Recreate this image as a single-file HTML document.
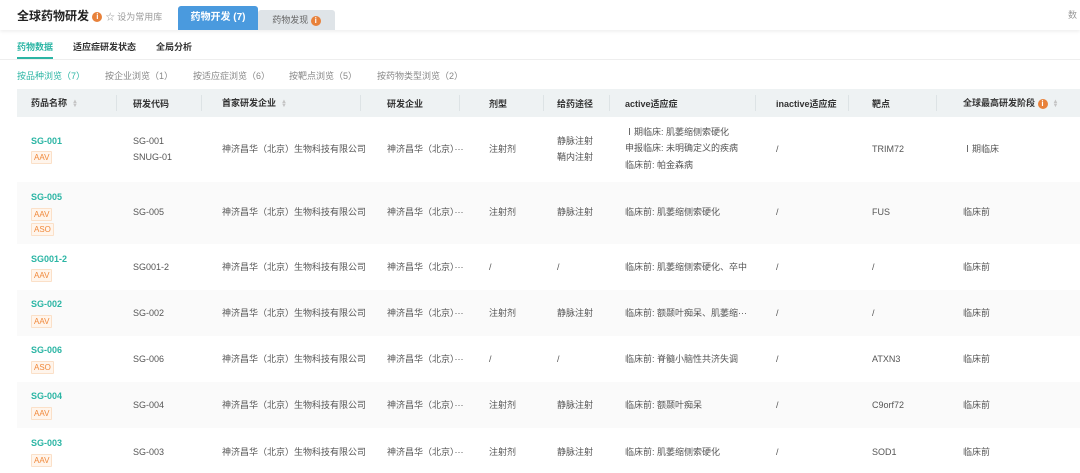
<!DOCTYPE html>
<html><head><meta charset="utf-8"><style>
*{margin:0;padding:0;box-sizing:border-box}
body{width:1080px;height:473px;overflow:hidden;background:#fff;font-family:"Liberation Sans","Noto Sans CJK SC",sans-serif;color:#555;font-size:9px;position:relative}
.a{position:absolute;white-space:nowrap;line-height:12px}
.info{display:inline-block;width:10px;height:10px;border-radius:50%;background:#e8813a;color:#fff;font-size:8px;line-height:10px;text-align:center;font-weight:bold;vertical-align:middle}
.row{position:absolute;left:17px;width:1063px}
.g{background:#fafafa}
.nm{color:#2bb5a4;font-weight:bold;font-size:9px}
.tag{position:absolute;color:#f0883a;background:#fff5ec;border:1px solid #fbe0c8;font-size:8px;padding:0 2px;line-height:11px;border-radius:1px}
.th{font-weight:bold;color:#333;font-size:9px}
.sep{position:absolute;top:95px;width:1px;height:16px;background:#dde3e5}
.sort{display:inline-block;color:#c4c4c4;font-size:6px;line-height:4px;vertical-align:middle;margin-left:5px}
</style></head><body>
<div class="a" style="left:0;top:0;width:1080px;height:30px;box-shadow:0 2px 3px rgba(0,0,0,0.06)"></div>
<div class="a" style="left:17px;top:9px;font-size:12px;font-weight:bold;color:#222;line-height:14px">全球药物研发 <span class="info">i</span> <span style="font-size:9px;font-weight:normal;color:#999">☆ 设为常用库</span></div>
<div class="a" style="left:178px;top:6px;width:80px;height:24px;background:#4a9ade;border-radius:3px 3px 0 0;color:#fff;font-weight:bold;font-size:10px;text-align:center;line-height:24px">药物开发 (7)</div>
<div class="a" style="left:258px;top:10px;width:77px;height:20px;background:#dfe4e8;border-radius:3px 3px 0 0;color:#666;font-size:9px;text-align:center;line-height:20px">药物发现 <span class="info">i</span></div>
<div class="a" style="left:1068px;top:9px;color:#999">数</div>
<div class="a" style="left:17px;top:41px;color:#2bb5a4;font-weight:bold">药物数据</div>
<div class="a" style="left:17px;top:57px;width:36px;height:2px;background:#2bb5a4"></div>
<div class="a" style="left:73px;top:41px;color:#333;font-weight:bold">适应症研发状态</div>
<div class="a" style="left:156px;top:41px;color:#333;font-weight:bold">全局分析</div>
<div class="a" style="left:0;top:59px;width:1080px;height:1px;background:#eee"></div>
<div class="a" style="left:17px;top:70px;color:#2bb5a4">按品种浏览（7）</div>
<div class="a" style="left:105px;top:70px;color:#888">按企业浏览（1）</div>
<div class="a" style="left:193px;top:70px;color:#888">按适应症浏览（6）</div>
<div class="a" style="left:289px;top:70px;color:#888">按靶点浏览（5）</div>
<div class="a" style="left:377px;top:70px;color:#888">按药物类型浏览（2）</div>
<div class="a" style="left:17px;top:89px;width:1063px;height:28px;background:#eef2f3"></div>
<div class="a th" style="left:31px;top:97px">药品名称<span class="sort">▲<br>▼</span></div>
<div class="a th" style="left:133px;top:98px">研发代码</div>
<div class="a th" style="left:222px;top:97px">首家研发企业<span class="sort">▲<br>▼</span></div>
<div class="a th" style="left:387px;top:98px">研发企业</div>
<div class="a th" style="left:489px;top:98px">剂型</div>
<div class="a th" style="left:557px;top:98px">给药途径</div>
<div class="a th" style="left:625px;top:98px">active适应症</div>
<div class="a th" style="left:776px;top:98px">inactive适应症</div>
<div class="a th" style="left:872px;top:98px">靶点</div>
<div class="a th" style="left:963px;top:97px">全球最高研发阶段 <span class="info">i</span><span class="sort">▲<br>▼</span></div>
<div class="sep" style="left:116px"></div><div class="sep" style="left:201px"></div><div class="sep" style="left:360px"></div><div class="sep" style="left:459px"></div><div class="sep" style="left:543px"></div><div class="sep" style="left:609px"></div><div class="sep" style="left:755px"></div><div class="sep" style="left:848px"></div><div class="sep" style="left:936px"></div>

<div class="row g" style="top:182px;height:62px"></div>
<div class="row g" style="top:290px;height:46px"></div>
<div class="row g" style="top:382px;height:46px"></div>

<!-- row1 -->
<div class="a nm" style="left:31px;top:135px">SG-001</div><div class="tag" style="left:31px;top:151px">AAV</div>
<div class="a" style="left:133px;top:135px">SG-001</div><div class="a" style="left:133px;top:151px">SNUG-01</div>
<div class="a" style="left:222px;top:143px">神济昌华（北京）生物科技有限公司</div>
<div class="a" style="left:387px;top:143px">神济昌华（北京）···</div>
<div class="a" style="left:489px;top:143px">注射剂</div>
<div class="a" style="left:557px;top:135px">静脉注射</div><div class="a" style="left:557px;top:151px">鞘内注射</div>
<div class="a" style="left:625px;top:126px">Ⅰ期临床: 肌萎缩侧索硬化</div><div class="a" style="left:625px;top:142px">申报临床: 未明确定义的疾病</div><div class="a" style="left:625px;top:159px">临床前: 帕金森病</div>
<div class="a" style="left:776px;top:143px">/</div><div class="a" style="left:872px;top:143px">TRIM72</div><div class="a" style="left:963px;top:143px">Ⅰ期临床</div>
<!-- row2 -->
<div class="a nm" style="left:31px;top:191px">SG-005</div><div class="tag" style="left:31px;top:208px">AAV</div><div class="tag" style="left:31px;top:223px">ASO</div>
<div class="a" style="left:133px;top:206px">SG-005</div>
<div class="a" style="left:222px;top:206px">神济昌华（北京）生物科技有限公司</div>
<div class="a" style="left:387px;top:206px">神济昌华（北京）···</div>
<div class="a" style="left:489px;top:206px">注射剂</div>
<div class="a" style="left:557px;top:206px">静脉注射</div>
<div class="a" style="left:625px;top:206px">临床前: 肌萎缩侧索硬化</div>
<div class="a" style="left:776px;top:206px">/</div><div class="a" style="left:872px;top:206px">FUS</div><div class="a" style="left:963px;top:206px">临床前</div>
<!-- row3 -->
<div class="a nm" style="left:31px;top:253px">SG001-2</div><div class="tag" style="left:31px;top:269px">AAV</div>
<div class="a" style="left:133px;top:261px">SG001-2</div>
<div class="a" style="left:222px;top:261px">神济昌华（北京）生物科技有限公司</div>
<div class="a" style="left:387px;top:261px">神济昌华（北京）···</div>
<div class="a" style="left:489px;top:261px">/</div><div class="a" style="left:557px;top:261px">/</div>
<div class="a" style="left:625px;top:261px">临床前: 肌萎缩侧索硬化、卒中</div>
<div class="a" style="left:776px;top:261px">/</div><div class="a" style="left:872px;top:261px">/</div><div class="a" style="left:963px;top:261px">临床前</div>
<!-- row4 -->
<div class="a nm" style="left:31px;top:298px">SG-002</div><div class="tag" style="left:31px;top:315px">AAV</div>
<div class="a" style="left:133px;top:307px">SG-002</div>
<div class="a" style="left:222px;top:307px">神济昌华（北京）生物科技有限公司</div>
<div class="a" style="left:387px;top:307px">神济昌华（北京）···</div>
<div class="a" style="left:489px;top:307px">注射剂</div><div class="a" style="left:557px;top:307px">静脉注射</div>
<div class="a" style="left:625px;top:307px">临床前: 额颞叶痴呆、肌萎缩···</div>
<div class="a" style="left:776px;top:307px">/</div><div class="a" style="left:872px;top:307px">/</div><div class="a" style="left:963px;top:307px">临床前</div>
<!-- row5 -->
<div class="a nm" style="left:31px;top:344px">SG-006</div><div class="tag" style="left:31px;top:361px">ASO</div>
<div class="a" style="left:133px;top:353px">SG-006</div>
<div class="a" style="left:222px;top:353px">神济昌华（北京）生物科技有限公司</div>
<div class="a" style="left:387px;top:353px">神济昌华（北京）···</div>
<div class="a" style="left:489px;top:353px">/</div><div class="a" style="left:557px;top:353px">/</div>
<div class="a" style="left:625px;top:353px">临床前: 脊髓小脑性共济失调</div>
<div class="a" style="left:776px;top:353px">/</div><div class="a" style="left:872px;top:353px">ATXN3</div><div class="a" style="left:963px;top:353px">临床前</div>
<!-- row6 -->
<div class="a nm" style="left:31px;top:390px">SG-004</div><div class="tag" style="left:31px;top:407px">AAV</div>
<div class="a" style="left:133px;top:399px">SG-004</div>
<div class="a" style="left:222px;top:399px">神济昌华（北京）生物科技有限公司</div>
<div class="a" style="left:387px;top:399px">神济昌华（北京）···</div>
<div class="a" style="left:489px;top:399px">注射剂</div><div class="a" style="left:557px;top:399px">静脉注射</div>
<div class="a" style="left:625px;top:399px">临床前: 额颞叶痴呆</div>
<div class="a" style="left:776px;top:399px">/</div><div class="a" style="left:872px;top:399px">C9orf72</div><div class="a" style="left:963px;top:399px">临床前</div>
<!-- row7 -->
<div class="a nm" style="left:31px;top:437px">SG-003</div><div class="tag" style="left:31px;top:454px">AAV</div>
<div class="a" style="left:133px;top:446px">SG-003</div>
<div class="a" style="left:222px;top:446px">神济昌华（北京）生物科技有限公司</div>
<div class="a" style="left:387px;top:446px">神济昌华（北京）···</div>
<div class="a" style="left:489px;top:446px">注射剂</div><div class="a" style="left:557px;top:446px">静脉注射</div>
<div class="a" style="left:625px;top:446px">临床前: 肌萎缩侧索硬化</div>
<div class="a" style="left:776px;top:446px">/</div><div class="a" style="left:872px;top:446px">SOD1</div><div class="a" style="left:963px;top:446px">临床前</div>
</body></html>
